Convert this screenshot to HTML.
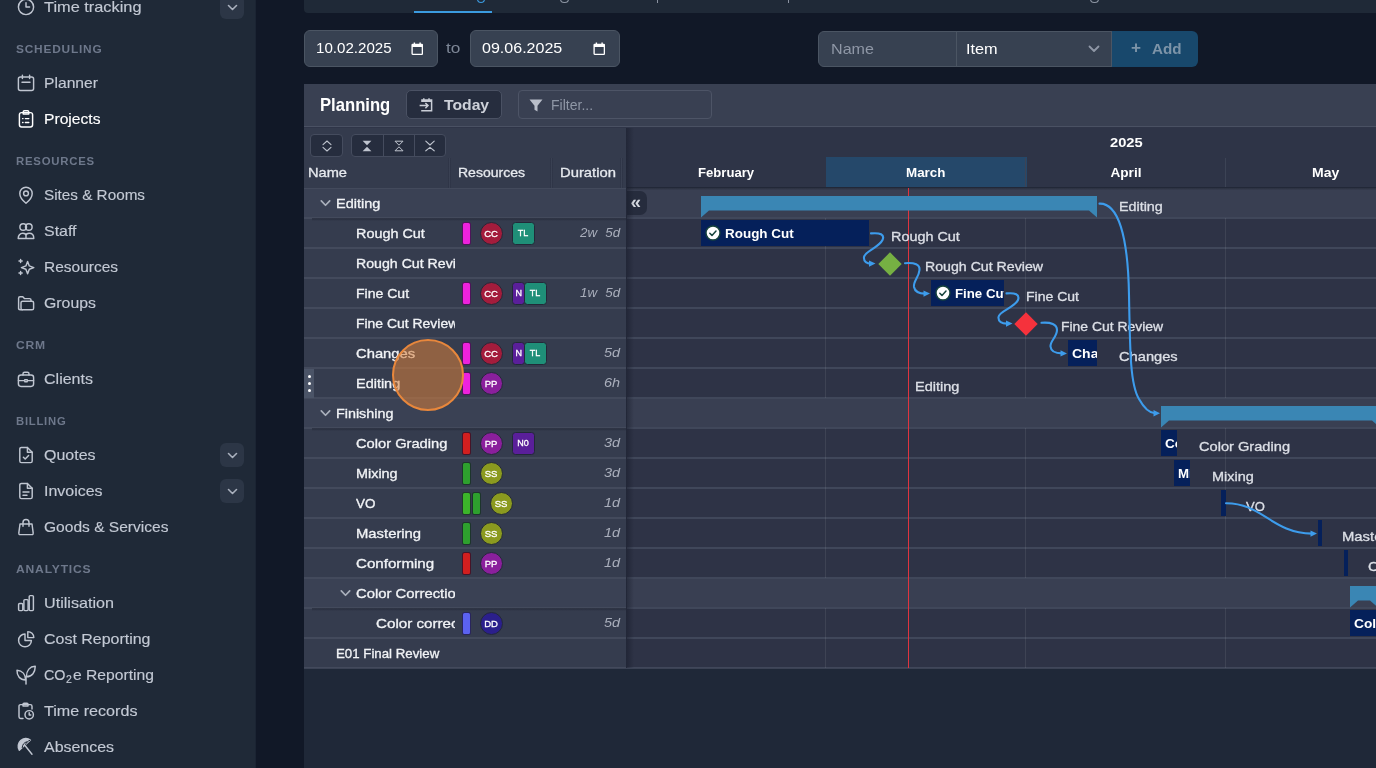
<!DOCTYPE html>
<html lang="en">
<head>
<meta charset="utf-8">
<title>Projects – Planning</title>
<style>
*{box-sizing:border-box;margin:0;padding:0}
html,body{width:1376px;height:768px;overflow:hidden;background:#111827;font-family:"Liberation Sans",sans-serif;color:#d1d5db}
#app{position:relative;width:1376px;height:768px;overflow:hidden;will-change:transform}
#app div,#app span,#app svg,#app i,#app b{position:absolute}
#side{left:0;top:0;width:256px;height:768px;background:#1f2937;border-right:1px solid #1b2433}
.ico{left:16px;width:20px;height:20px;fill:none;stroke:#c0c6d1;stroke-width:1.450;stroke-linecap:round;stroke-linejoin:round}
.ico.act{stroke:#fff}
.chev{left:220px;width:24px;height:24px;border-radius:6px;background:#2c3646}
.chev svg{left:6.500px;top:7.500px;width:11px;height:9px;fill:none;stroke:#aab1be;stroke-width:1.600;stroke-linecap:round;stroke-linejoin:round}
#tabs{left:304px;top:0;width:1072px;height:13px;background:#1f2937;border-radius:0 0 0 4px;overflow:hidden}
#tabs i{left:110px;top:11px;width:78px;height:2px;background:#3b9be0}
.inp{background:#374151;border:1px solid #4b5563;border-radius:6px}
#panel{left:304px;top:84px;width:1072px;height:585px;background:#2f3548;overflow:hidden}
</style>
</head>
<body>
<div id="app">
<div id="side">
<svg class="ico" viewBox="0 0 20 20" style="top:-3px"><circle cx="10" cy="10" r="7.600"/><path d="M10 5.600V10h3.600"/></svg>
<span style="left:44px;top:-3.200px;font-size:15px;line-height:20px;color:#c3c9d4;white-space:nowrap;-webkit-text-stroke:0.15px #c3c9d4;transform:scaleX(1.09);transform-origin:left center;">Time tracking</span>
<span style="left:16px;top:38.709px;font-size:11.800px;line-height:20px;color:#6e788b;white-space:nowrap;font-weight:bold;letter-spacing:0.800px;transform:scaleX(1.006);transform-origin:left center;">SCHEDULING</span>
<svg class="ico" viewBox="0 0 20 20" style="top:73px"><rect x="2.400" y="4" width="15.200" height="13.400" rx="2"/><path d="M6.400 2.200v3.200M13.600 2.200v3.200M6 9.200h8"/></svg>
<span style="left:44px;top:72.799px;font-size:15px;line-height:20px;color:#c3c9d4;white-space:nowrap;-webkit-text-stroke:0.15px #c3c9d4;transform:scaleX(1.044);transform-origin:left center;">Planner</span>
<svg class="ico act" viewBox="0 0 20 20" style="top:109px"><rect x="3.400" y="3.600" width="13.200" height="14.400" rx="2.200"/><path d="M7.200 3.600V3a1.200 1.200 0 0 1 1.200-1.200h3.200A1.200 1.200 0 0 1 12.800 3v.600M7.200 3.600v1.400h5.600V3.600M9.400 9.600h3.400M9.400 13.400h3.400M6.600 9.600h.400M6.600 13.400h.400"/></svg>
<span style="left:44px;top:108.799px;font-size:15px;line-height:20px;color:#fff;white-space:nowrap;-webkit-text-stroke:0.15px #fff;transform:scaleX(1.043);transform-origin:left center;">Projects</span>
<span style="left:16px;top:150.709px;font-size:11.800px;line-height:20px;color:#6e788b;white-space:nowrap;font-weight:bold;letter-spacing:0.800px;transform:scaleX(0.964);transform-origin:left center;">RESOURCES</span>
<svg class="ico" viewBox="0 0 20 20" style="top:185px"><path d="M10 18.200s6.200-5 6.200-9.800a6.200 6.200 0 0 0-12.400 0c0 4.800 6.200 9.800 6.200 9.800z"/><circle cx="10" cy="8.400" r="2.400"/></svg>
<span style="left:44px;top:184.799px;font-size:15px;line-height:20px;color:#c3c9d4;white-space:nowrap;-webkit-text-stroke:0.15px #c3c9d4;transform:scaleX(1.018);transform-origin:left center;">Sites &amp; Rooms</span>
<svg class="ico" viewBox="0 0 20 20" style="top:221px"><circle cx="7.200" cy="6" r="3.300"/><circle cx="12.800" cy="6" r="3.300"/><path d="M2.200 17.400c0-3 1.800-5.200 4.600-5.200 2 0 3.200 1.200 3.200 2.400 0-1.200 1.200-2.400 3.200-2.400 2.800 0 4.600 2.200 4.600 5.200zM10 14.600v2.800"/></svg>
<span style="left:44px;top:220.799px;font-size:15px;line-height:20px;color:#c3c9d4;white-space:nowrap;-webkit-text-stroke:0.15px #c3c9d4;transform:scaleX(1.062);transform-origin:left center;">Staff</span>
<svg class="ico" viewBox="0 0 20 20" style="top:257px"><path d="M11.600 4.400l1.700 4.500 4.500 1.700-4.500 1.700-1.700 4.500-1.700-4.500-4.500-1.700 4.500-1.700z"/><path d="M4.600 2.400v3.200M3 4h3.200M4.600 14.400v3.200M3 16h3.200"/></svg>
<span style="left:44px;top:256.800px;font-size:15px;line-height:20px;color:#c3c9d4;white-space:nowrap;-webkit-text-stroke:0.15px #c3c9d4;transform:scaleX(1.032);transform-origin:left center;">Resources</span>
<svg class="ico" viewBox="0 0 20 20" style="top:293px"><path d="M2.600 15.400V5.200a1.400 1.400 0 0 1 1.400-1.400h2.800l1.600 1.800h5.200a1.400 1.400 0 0 1 1.400 1.400v1.200"/><rect x="5" y="8.200" width="12.600" height="8.600" rx="1.600"/><path d="M2.600 15.400a1.400 1.400 0 0 0 1.400 1.400h2.400"/></svg>
<span style="left:44px;top:292.800px;font-size:15px;line-height:20px;color:#c3c9d4;white-space:nowrap;-webkit-text-stroke:0.15px #c3c9d4;transform:scaleX(1.057);transform-origin:left center;">Groups</span>
<span style="left:16px;top:334.709px;font-size:11.800px;line-height:20px;color:#6e788b;white-space:nowrap;font-weight:bold;letter-spacing:0.800px;transform:scaleX(1.025);transform-origin:left center;">CRM</span>
<svg class="ico" viewBox="0 0 20 20" style="top:369px"><rect x="2.400" y="6" width="15.200" height="11.400" rx="2.600"/><path d="M7 6V4.800a1.600 1.600 0 0 1 1.600-1.600h2.800A1.600 1.600 0 0 1 13 4.800V6M2.400 11.600h6M11.600 11.600h6M8.800 10.600h2.400v2.200H8.800z"/></svg>
<span style="left:44px;top:368.800px;font-size:15px;line-height:20px;color:#c3c9d4;white-space:nowrap;-webkit-text-stroke:0.15px #c3c9d4;transform:scaleX(1.068);transform-origin:left center;">Clients</span>
<span style="left:16px;top:410.709px;font-size:11.800px;line-height:20px;color:#6e788b;white-space:nowrap;font-weight:bold;letter-spacing:0.800px;transform:scaleX(0.956);transform-origin:left center;">BILLING</span>
<svg class="ico" viewBox="0 0 20 20" style="top:445px"><path d="M11.400 2.400H5.400A1.600 1.600 0 0 0 3.800 4v12a1.600 1.600 0 0 0 1.600 1.600h9.200a1.600 1.600 0 0 0 1.600-1.600V7.200z"/><path d="M11.400 2.400v4.800h4.800M7.400 12.200l1.800 1.800 3.400-3.600"/></svg>
<span style="left:44px;top:444.800px;font-size:15px;line-height:20px;color:#c3c9d4;white-space:nowrap;-webkit-text-stroke:0.15px #c3c9d4;transform:scaleX(1.065);transform-origin:left center;">Quotes</span>
<svg class="ico" viewBox="0 0 20 20" style="top:481px"><path d="M11.400 2.400H5.400A1.600 1.600 0 0 0 3.800 4v12a1.600 1.600 0 0 0 1.600 1.600h9.200a1.600 1.600 0 0 0 1.600-1.600V7.200z"/><path d="M11.400 2.400v4.800h4.800M7 11h6M7 14.200h4"/></svg>
<span style="left:44px;top:480.800px;font-size:15px;line-height:20px;color:#c3c9d4;white-space:nowrap;-webkit-text-stroke:0.15px #c3c9d4;transform:scaleX(1.063);transform-origin:left center;">Invoices</span>
<svg class="ico" viewBox="0 0 20 20" style="top:517px"><path d="M4 7h12l1.200 9.200a1.200 1.200 0 0 1-1.200 1.400H4a1.200 1.200 0 0 1-1.200-1.400z"/><path d="M7 9.200V5.400a3 3 0 0 1 6 0v3.800"/></svg>
<span style="left:44px;top:516.799px;font-size:15px;line-height:20px;color:#c3c9d4;white-space:nowrap;-webkit-text-stroke:0.15px #c3c9d4;transform:scaleX(1.037);transform-origin:left center;">Goods &amp; Services</span>
<span style="left:16px;top:558.709px;font-size:11.800px;line-height:20px;color:#6e788b;white-space:nowrap;font-weight:bold;letter-spacing:0.800px;transform:scaleX(1.025);transform-origin:left center;">ANALYTICS</span>
<svg class="ico" viewBox="0 0 20 20" style="top:593px"><rect x="2.600" y="10.400" width="4.200" height="7.200" rx="1"/><rect x="7.900" y="6.600" width="4.200" height="11" rx="1"/><rect x="13.200" y="2.600" width="4.200" height="15" rx="1"/></svg>
<span style="left:44px;top:592.799px;font-size:15px;line-height:20px;color:#c3c9d4;white-space:nowrap;-webkit-text-stroke:0.15px #c3c9d4;transform:scaleX(1.076);transform-origin:left center;">Utilisation</span>
<svg class="ico" viewBox="0 0 20 20" style="top:629px"><path d="M9 5a6.400 6.400 0 1 0 6.400 6.400H9z"/><path d="M11.800 2.600a6 6 0 0 1 6 6h-6z"/></svg>
<span style="left:44px;top:628.799px;font-size:15px;line-height:20px;color:#c3c9d4;white-space:nowrap;-webkit-text-stroke:0.15px #c3c9d4;transform:scaleX(1.064);transform-origin:left center;">Cost Reporting</span>
<svg class="ico" viewBox="0 0 20 20" style="top:665px"><path d="M10 11.800V19"/><path d="M9.600 15C9.600 9.600 6.400 5.600 1 5.200 0.800 11 4 15 9.600 15z"/><path d="M10.400 11.800C10.400 5.200 14 1.400 19.200 1.200 19.400 7 16 11.800 10.400 11.800z"/></svg>
<span style="left:44px;top:664.799px;font-size:15px;line-height:20px;color:#c3c9d4;white-space:nowrap;-webkit-text-stroke:0.15px #c3c9d4;transform:scaleX(0.956);transform-origin:left center;">CO</span>
<span style="left:66.400px;top:669.533px;font-size:10px;line-height:20px;color:#c3c9d4;white-space:nowrap;-webkit-text-stroke:0.15px #c3c9d4;transform:scaleX(1.05);transform-origin:left center;">2</span>
<span style="left:73.100px;top:664.799px;font-size:15px;line-height:20px;color:#c3c9d4;white-space:nowrap;-webkit-text-stroke:0.15px #c3c9d4;transform:scaleX(1.044);transform-origin:left center;">e Reporting</span>
<svg class="ico" viewBox="0 0 20 20" style="top:701px"><path d="M7 17.400H4.600A1.600 1.600 0 0 1 3 15.800V5.200A1.600 1.600 0 0 1 4.600 3.600h9.800A1.600 1.600 0 0 1 16 5.200V8"/><path d="M7 5V3.200A1 1 0 0 1 8 2.200h3a1 1 0 0 1 1 1V5z"/><circle cx="13.200" cy="13.800" r="4.200"/><path d="M13.200 11.800v2.200h1.600"/></svg>
<span style="left:44px;top:700.799px;font-size:15px;line-height:20px;color:#c3c9d4;white-space:nowrap;-webkit-text-stroke:0.15px #c3c9d4;transform:scaleX(1.075);transform-origin:left center;">Time records</span>
<svg class="ico" viewBox="0 0 20 20" style="top:737px"><path d="M3.300 13.200A7.700 7.700 0 0 1 14.400 3z" fill="#c3c9d4"/><path d="M8.800 8.200L16 17.200"/><path d="M6.200 10.600C6.400 7.600 8 5.400 10.800 4.800M9.600 7.400C10.200 5.600 11.600 4.200 14 3.200" stroke="#1f2937" stroke-width="1"/></svg>
<span style="left:44px;top:736.799px;font-size:15px;line-height:20px;color:#c3c9d4;white-space:nowrap;-webkit-text-stroke:0.15px #c3c9d4;transform:scaleX(1.063);transform-origin:left center;">Absences</span>
<div class="chev" style="top:-5px"><svg viewBox="0 0 11 9"><path d="M1.500 2.500l4 4 4-4"/></svg></div>
<div class="chev" style="top:443px"><svg viewBox="0 0 11 9"><path d="M1.500 2.500l4 4 4-4"/></svg></div>
<div class="chev" style="top:479px"><svg viewBox="0 0 11 9"><path d="M1.500 2.500l4 4 4-4"/></svg></div>
</div>
<div id="tabs"><i></i><b style="left:172.500px;top:-4px;width:8px;height:7px;border:1.500px solid #3b9be0;border-top:0;border-radius:0 0 4px 4px"></b><b style="left:255.500px;top:-4px;width:9px;height:7px;border:1.500px solid #8b93a1;border-top:0;border-radius:0 0 4px 4px"></b><b style="left:352.500px;top:0;width:1.500px;height:3px;background:#8b93a1"></b><b style="left:483.500px;top:0;width:1.500px;height:3px;background:#8b93a1"></b><b style="left:786px;top:-4px;width:9px;height:7px;border:1.500px solid #8b93a1;border-top:0;border-radius:0 0 4px 4px"></b></div>
<div class="inp" style="left:304px;top:30px;width:134px;height:37px"><svg viewBox="0 0 14 15" style="left:105.500px;top:11px;width:12.500px;height:13.500px;fill:#fff"><path d="M3 0.500h1.600V2h4.800V0.500H11V2h1.200A1.300 1.300 0 0 1 13.500 3.300v9.900a1.300 1.300 0 0 1-1.300 1.300H1.800A1.300 1.300 0 0 1 0.500 13.200V3.300A1.300 1.300 0 0 1 1.800 2H3zM2 5.600v7.400h10V5.600z" fill-rule="evenodd"/></svg></div>
<span style="left:315.500px;top:38.038px;font-size:14.600px;line-height:20px;color:#fff;white-space:nowrap;transform:scaleX(1.035);transform-origin:left center;">10.02.2025</span>
<span style="left:446px;top:38.226px;font-size:15.500px;line-height:20px;color:#7d8696;white-space:nowrap;transform:scaleX(1.113);transform-origin:left center;">to</span>
<div class="inp" style="left:470px;top:30px;width:150px;height:37px"><svg viewBox="0 0 14 15" style="left:121.500px;top:11px;width:12.500px;height:13.500px;fill:#fff"><path d="M3 0.500h1.600V2h4.800V0.500H11V2h1.200A1.300 1.300 0 0 1 13.500 3.300v9.900a1.300 1.300 0 0 1-1.300 1.300H1.800A1.300 1.300 0 0 1 0.500 13.200V3.300A1.300 1.300 0 0 1 1.800 2H3zM2 5.600v7.400h10V5.600z" fill-rule="evenodd"/></svg></div>
<span style="left:481.500px;top:38.038px;font-size:14.600px;line-height:20px;color:#fff;white-space:nowrap;transform:scaleX(1.099);transform-origin:left center;">09.06.2025</span>
<div style="left:818px;top:31px;width:139px;height:36px;background:#374151;border:1px solid #4b5563;border-radius:6px 0 0 6px"></div>
<span style="left:830.700px;top:38.738px;font-size:14.600px;line-height:20px;color:#8f97a6;white-space:nowrap;transform:scaleX(1.104);transform-origin:left center;">Name</span>
<div style="left:956px;top:31px;width:156px;height:36px;background:#374151;border:1px solid #4b5563"><svg viewBox="0 0 12 8" style="left:131px;top:13px;width:12px;height:8px;fill:none;stroke:#8f97a6;stroke-width:1.800;stroke-linecap:round;stroke-linejoin:round"><path d="M1.500 1.500l4.500 4.500 4.500-4.500"/></svg></div>
<span style="left:966.400px;top:38.738px;font-size:14.600px;line-height:20px;color:#fff;white-space:nowrap;transform:scaleX(1.117);transform-origin:left center;">Item</span>
<div style="left:1112px;top:31px;width:86px;height:36px;background:#18486c;border-radius:0 6px 6px 0"></div>
<span style="left:1130.600px;top:38.053px;font-size:16px;line-height:20px;color:#7d94a8;white-space:nowrap;font-weight:bold;transform:scaleX(1.07);transform-origin:left center;">+</span>
<span style="left:1152.100px;top:38.538px;font-size:14.600px;line-height:20px;color:#7d94a8;white-space:nowrap;font-weight:bold;transform:scaleX(1.043);transform-origin:left center;">Add</span>
<div style="left:304px;top:84px;width:1072px;height:684px;background:#1f2838"></div>
<div id="panel">
<div style="left:0;top:0;width:1072px;height:43px;background:#394052;border-bottom:1px solid #4a5163"></div>
<span style="left:16px;top:10.99px;font-size:18.200px;line-height:20px;color:#fff;white-space:nowrap;font-weight:bold;transform:scaleX(0.915);transform-origin:left center;">Planning</span>
<div style="left:102px;top:6px;width:96px;height:29px;background:#262d3e;border:1px solid #4a5163;border-radius:5px"><svg viewBox="0 0 16 16" style="left:11px;top:6px;width:16px;height:16px;fill:none;stroke:#c9cdd6;stroke-width:1.500;stroke-linecap:butt;stroke-linejoin:miter"><path d="M3.200 3H13.600V13.800H3.200M3.200 4.200H13.600M5.800 1.200V3M11 1.200V3M1.600 8.600H10M7.400 6L10 8.600 7.400 11.200"/></svg></div>
<span style="left:139.800px;top:10.608px;font-size:14.400px;line-height:20px;color:#cdd1d9;white-space:nowrap;font-weight:bold;transform:scaleX(1.092);transform-origin:left center;">Today</span>
<div style="left:214px;top:6px;width:194px;height:29px;background:#394052;border:1px solid #4d5466;border-radius:4px"><svg viewBox="0 0 14 14" style="left:10px;top:8px;width:14px;height:14px;fill:#b9bec9"><path d="M0.500 0.500h13l-5 6.200v5.800l-3-1.800v-4z"/></svg></div>
<span style="left:247.400px;top:10.608px;font-size:14.400px;line-height:20px;color:#8f97a6;white-space:nowrap;transform:scaleX(0.975);transform-origin:left center;">Filter...</span>
<div style="left:0px;top:44px;width:322px;height:60px;background:#343b4d"></div>
<div style="left:6px;top:50px;width:33px;height:23px;background:#262d3e;border:1px solid #454c5e;border-radius:4px"><svg viewBox="0 0 10 12" style="left:11px;top:5px;width:10px;height:12px;fill:none;stroke:#bfc4ce;stroke-width:1.100;stroke-linecap:round;stroke-linejoin:round"><path d="M1 4.600L5 1l4 3.600M1 7.400L5 11l4-3.600"/></svg></div>
<div style="left:47px;top:50px;width:95px;height:23px;background:#262d3e;border:1px solid #454c5e;border-radius:4px"><i style="left:30.500px;top:0;width:1px;height:21px;background:#454c5e"></i><i style="left:61.500px;top:0;width:1px;height:21px;background:#454c5e"></i><svg viewBox="0 0 10 12" style="left:10px;top:5px;width:10px;height:12px;fill:#bfc4ce"><path d="M0.600 0.800h8.800L5 5.200zM0.600 11.200h8.800L5 6.800z"/></svg><svg viewBox="0 0 10 12" style="left:41.500px;top:5px;width:10px;height:12px;stroke:#bfc4ce;stroke-width:1;stroke-linejoin:round;fill:none"><path d="M1 1.200h8L5 5.200zM1 10.800h8L5 6.800z"/></svg><svg viewBox="0 0 10 12" style="left:72.500px;top:5px;width:10px;height:12px;stroke:#bfc4ce;stroke-width:1.100;stroke-linecap:round;stroke-linejoin:round;fill:none"><path d="M0.800 1.200L5 5l4.200-3.800M0.800 10.800L5 7.400l4.200 3.400"/></svg></div>
<span style="left:4px;top:78.997px;font-size:12.700px;line-height:20px;color:#e6e9ee;white-space:nowrap;-webkit-text-stroke:0.300px #e6e9ee;transform:scaleX(1.152);transform-origin:left center;">Name</span>
<span style="left:154px;top:78.997px;font-size:12.700px;line-height:20px;color:#e6e9ee;white-space:nowrap;-webkit-text-stroke:0.300px #e6e9ee;transform:scaleX(1.105);transform-origin:left center;">Resources</span>
<span style="left:256px;top:78.997px;font-size:12.700px;line-height:20px;color:#e6e9ee;white-space:nowrap;-webkit-text-stroke:0.300px #e6e9ee;transform:scaleX(1.167);transform-origin:left center;">Duration</span>
<i style="left:144px;top:74px;width:3px;height:30px;background:linear-gradient(90deg,#2a3042,#3a4153 50%,#2a3042)"></i>
<i style="left:246px;top:74px;width:3px;height:30px;background:linear-gradient(90deg,#2a3042,#3a4153 50%,#2a3042)"></i>
<i style="left:316px;top:74px;width:3px;height:30px;background:linear-gradient(90deg,#2a3042,#3a4153 50%,#2a3042)"></i>
<div style="left:0px;top:104px;width:322px;height:30px;background:#3a4154;border-bottom:1px solid #434a5c;overflow:hidden"><i style="left:0;top:0;width:322px;height:1px;background:#434a5c"></i>
<svg viewBox="0 0 12 8" style="left:16px;top:12px;width:11px;height:7px;fill:none;stroke:#aab0bc;stroke-width:1.900;stroke-linecap:round;stroke-linejoin:round"><path d="M1.200 1l4.800 5L10.800 1"/></svg>
<div style="left:32px;top:6.205px;width:118.500px;height:20px;overflow:hidden"><span style="left:0;top:0;font-size:12.100px;line-height:20px;color:#f1f3f6;white-space:nowrap;-webkit-text-stroke:0.300px #f1f3f6;transform:scaleX(1.198);transform-origin:left center;">Editing</span></div>
</div>
<div style="left:0px;top:134px;width:322px;height:30px;background:#353c4e;border-bottom:1px solid #434a5c;overflow:hidden"><i style="left:0;top:0;width:322px;height:1px;background:#434a5c"></i>
<div style="left:52px;top:6.205px;width:98.500px;height:20px;overflow:hidden"><span style="left:0;top:0;font-size:12.100px;line-height:20px;color:#f1f3f6;white-space:nowrap;-webkit-text-stroke:0.300px #f1f3f6;transform:scaleX(1.19);transform-origin:left center;">Rough Cut</span></div>
<i style="left:157.5px;top:3.500px;width:9.500px;height:23.500px;background:#ee22dd;border:1.500px solid rgba(24,18,44,.75);border-radius:2.500px"></i>
<b style="left:175.5px;top:3.500px;width:23px;height:23px;border-radius:11.500px;background:#a31c3c;border:1px solid #232939;color:#fff;font-size:9.500px;font-weight:normal;-webkit-text-stroke:.300px #fff;line-height:21px;text-align:center">CC</b>
<b style="left:207.5px;top:3.500px;width:23px;height:23px;border-radius:3.500px;background:#1f8f78;border:1px solid #232939;color:#fff;font-size:9px;font-weight:normal;-webkit-text-stroke:.300px #fff;line-height:21px;text-align:center;">TL</b>
<span style="left:276px;top:4.532px;font-size:12.600px;line-height:20px;color:#a9aebb;white-space:nowrap;font-style:italic;word-spacing:4.200px;transform:scaleX(1.063);transform-origin:left center;">2w 5d</span>
</div>
<div style="left:0px;top:164px;width:322px;height:30px;background:#353c4e;border-bottom:1px solid #434a5c;overflow:hidden"><i style="left:0;top:0;width:322px;height:1px;background:#434a5c"></i>
<div style="left:52px;top:6.205px;width:98.500px;height:20px;overflow:hidden"><span style="left:0;top:0;font-size:12.100px;line-height:20px;color:#f1f3f6;white-space:nowrap;-webkit-text-stroke:0.300px #f1f3f6;transform:scaleX(1.17);transform-origin:left center;">Rough Cut Review</span></div>
</div>
<div style="left:0px;top:194px;width:322px;height:30px;background:#353c4e;border-bottom:1px solid #434a5c;overflow:hidden"><i style="left:0;top:0;width:322px;height:1px;background:#434a5c"></i>
<div style="left:52px;top:6.205px;width:98.500px;height:20px;overflow:hidden"><span style="left:0;top:0;font-size:12.100px;line-height:20px;color:#f1f3f6;white-space:nowrap;-webkit-text-stroke:0.300px #f1f3f6;transform:scaleX(1.161);transform-origin:left center;">Fine Cut</span></div>
<i style="left:157.5px;top:3.500px;width:9.500px;height:23.500px;background:#ee22dd;border:1.500px solid rgba(24,18,44,.75);border-radius:2.500px"></i>
<b style="left:175.5px;top:3.500px;width:23px;height:23px;border-radius:11.500px;background:#a31c3c;border:1px solid #232939;color:#fff;font-size:9.500px;font-weight:normal;-webkit-text-stroke:.300px #fff;line-height:21px;text-align:center">CC</b>
<b style="left:207.5px;top:3.500px;width:13px;height:23px;border-radius:3.500px;background:#5a1f9a;border:1px solid #232939;color:#fff;font-size:9px;font-weight:normal;-webkit-text-stroke:.300px #fff;line-height:21px;text-align:left;padding-left:3px;">N</b>
<b style="left:219.5px;top:3.500px;width:23px;height:23px;border-radius:3.500px;background:#1f8f78;border:1px solid #232939;color:#fff;font-size:9px;font-weight:normal;-webkit-text-stroke:.300px #fff;line-height:21px;text-align:center;">TL</b>
<span style="left:276px;top:4.532px;font-size:12.600px;line-height:20px;color:#a9aebb;white-space:nowrap;font-style:italic;word-spacing:4.200px;transform:scaleX(1.063);transform-origin:left center;">1w 5d</span>
</div>
<div style="left:0px;top:224px;width:322px;height:30px;background:#353c4e;border-bottom:1px solid #434a5c;overflow:hidden"><i style="left:0;top:0;width:322px;height:1px;background:#434a5c"></i>
<div style="left:52px;top:6.205px;width:98.500px;height:20px;overflow:hidden"><span style="left:0;top:0;font-size:12.100px;line-height:20px;color:#f1f3f6;white-space:nowrap;-webkit-text-stroke:0.300px #f1f3f6;transform:scaleX(1.152);transform-origin:left center;">Fine Cut Review</span></div>
</div>
<div style="left:0px;top:254px;width:322px;height:30px;background:#353c4e;border-bottom:1px solid #434a5c;overflow:hidden"><i style="left:0;top:0;width:322px;height:1px;background:#434a5c"></i>
<div style="left:52px;top:6.205px;width:98.500px;height:20px;overflow:hidden"><span style="left:0;top:0;font-size:12.100px;line-height:20px;color:#f1f3f6;white-space:nowrap;-webkit-text-stroke:0.300px #f1f3f6;transform:scaleX(1.221);transform-origin:left center;">Changes</span></div>
<i style="left:157.5px;top:3.500px;width:9.500px;height:23.500px;background:#ee22dd;border:1.500px solid rgba(24,18,44,.75);border-radius:2.500px"></i>
<b style="left:175.5px;top:3.500px;width:23px;height:23px;border-radius:11.500px;background:#a31c3c;border:1px solid #232939;color:#fff;font-size:9.500px;font-weight:normal;-webkit-text-stroke:.300px #fff;line-height:21px;text-align:center">CC</b>
<b style="left:207.5px;top:3.500px;width:13px;height:23px;border-radius:3.500px;background:#5a1f9a;border:1px solid #232939;color:#fff;font-size:9px;font-weight:normal;-webkit-text-stroke:.300px #fff;line-height:21px;text-align:left;padding-left:3px;">N</b>
<b style="left:219.5px;top:3.500px;width:23px;height:23px;border-radius:3.500px;background:#1f8f78;border:1px solid #232939;color:#fff;font-size:9px;font-weight:normal;-webkit-text-stroke:.300px #fff;line-height:21px;text-align:center;">TL</b>
<span style="left:300.100px;top:4.532px;font-size:12.600px;line-height:20px;color:#a9aebb;white-space:nowrap;font-style:italic;word-spacing:4.200px;transform:scaleX(1.149);transform-origin:left center;">5d</span>
</div>
<div style="left:0px;top:284px;width:322px;height:30px;background:#353c4e;border-bottom:1px solid #434a5c;overflow:hidden"><i style="left:0;top:0;width:322px;height:1px;background:#434a5c"></i>
<div style="left:52px;top:6.205px;width:98.500px;height:20px;overflow:hidden"><span style="left:0;top:0;font-size:12.100px;line-height:20px;color:#f1f3f6;white-space:nowrap;-webkit-text-stroke:0.300px #f1f3f6;transform:scaleX(1.195);transform-origin:left center;">Editing</span></div>
<i style="left:157.5px;top:3.500px;width:9.500px;height:23.500px;background:#ee22dd;border:1.500px solid rgba(24,18,44,.75);border-radius:2.500px"></i>
<b style="left:175.5px;top:3.500px;width:23px;height:23px;border-radius:11.500px;background:#8a1f9c;border:1px solid #232939;color:#fff;font-size:9.500px;font-weight:normal;-webkit-text-stroke:.300px #fff;line-height:21px;text-align:center">PP</b>
<span style="left:300.100px;top:4.532px;font-size:12.600px;line-height:20px;color:#a9aebb;white-space:nowrap;font-style:italic;word-spacing:4.200px;transform:scaleX(1.149);transform-origin:left center;">6h</span>
</div>
<div style="left:0px;top:314px;width:322px;height:30px;background:#3a4154;border-bottom:1px solid #434a5c;overflow:hidden"><i style="left:0;top:0;width:322px;height:1px;background:#434a5c"></i>
<svg viewBox="0 0 12 8" style="left:16px;top:12px;width:11px;height:7px;fill:none;stroke:#aab0bc;stroke-width:1.900;stroke-linecap:round;stroke-linejoin:round"><path d="M1.200 1l4.800 5L10.800 1"/></svg>
<div style="left:32px;top:6.205px;width:118.500px;height:20px;overflow:hidden"><span style="left:0;top:0;font-size:12.100px;line-height:20px;color:#f1f3f6;white-space:nowrap;-webkit-text-stroke:0.300px #f1f3f6;transform:scaleX(1.186);transform-origin:left center;">Finishing</span></div>
</div>
<div style="left:0px;top:344px;width:322px;height:30px;background:#353c4e;border-bottom:1px solid #434a5c;overflow:hidden"><i style="left:0;top:0;width:322px;height:1px;background:#434a5c"></i>
<div style="left:52px;top:6.205px;width:98.500px;height:20px;overflow:hidden"><span style="left:0;top:0;font-size:12.100px;line-height:20px;color:#f1f3f6;white-space:nowrap;-webkit-text-stroke:0.300px #f1f3f6;transform:scaleX(1.213);transform-origin:left center;">Color Grading</span></div>
<i style="left:157.5px;top:3.500px;width:9.500px;height:23.500px;background:#d21f1f;border:1.500px solid rgba(24,18,44,.75);border-radius:2.500px"></i>
<b style="left:175.5px;top:3.500px;width:23px;height:23px;border-radius:11.500px;background:#8a1f9c;border:1px solid #232939;color:#fff;font-size:9.500px;font-weight:normal;-webkit-text-stroke:.300px #fff;line-height:21px;text-align:center">PP</b>
<b style="left:207.5px;top:3.500px;width:23px;height:23px;border-radius:3.500px;background:#5a1f9a;border:1px solid #232939;color:#fff;font-size:9px;font-weight:normal;-webkit-text-stroke:.300px #fff;line-height:21px;text-align:center;">N0</b>
<span style="left:300.100px;top:4.532px;font-size:12.600px;line-height:20px;color:#a9aebb;white-space:nowrap;font-style:italic;word-spacing:4.200px;transform:scaleX(1.149);transform-origin:left center;">3d</span>
</div>
<div style="left:0px;top:374px;width:322px;height:30px;background:#353c4e;border-bottom:1px solid #434a5c;overflow:hidden"><i style="left:0;top:0;width:322px;height:1px;background:#434a5c"></i>
<div style="left:52px;top:6.205px;width:98.500px;height:20px;overflow:hidden"><span style="left:0;top:0;font-size:12.100px;line-height:20px;color:#f1f3f6;white-space:nowrap;-webkit-text-stroke:0.300px #f1f3f6;transform:scaleX(1.19);transform-origin:left center;">Mixing</span></div>
<i style="left:157.5px;top:3.500px;width:9.500px;height:23.500px;background:#2ea02e;border:1.500px solid rgba(24,18,44,.75);border-radius:2.500px"></i>
<b style="left:175.5px;top:3.500px;width:23px;height:23px;border-radius:11.500px;background:#8b9a1f;border:1px solid #232939;color:#fff;font-size:9.500px;font-weight:normal;-webkit-text-stroke:.300px #fff;line-height:21px;text-align:center">SS</b>
<span style="left:300.100px;top:4.532px;font-size:12.600px;line-height:20px;color:#a9aebb;white-space:nowrap;font-style:italic;word-spacing:4.200px;transform:scaleX(1.149);transform-origin:left center;">3d</span>
</div>
<div style="left:0px;top:404px;width:322px;height:30px;background:#353c4e;border-bottom:1px solid #434a5c;overflow:hidden"><i style="left:0;top:0;width:322px;height:1px;background:#434a5c"></i>
<div style="left:52px;top:6.205px;width:98.500px;height:20px;overflow:hidden"><span style="left:0;top:0;font-size:12.100px;line-height:20px;color:#f1f3f6;white-space:nowrap;-webkit-text-stroke:0.300px #f1f3f6;transform:scaleX(1.11);transform-origin:left center;">VO</span></div>
<i style="left:157.5px;top:3.500px;width:9.500px;height:23.500px;background:#3cb52a;border:1.500px solid rgba(24,18,44,.75);border-radius:2.500px"></i>
<i style="left:167.5px;top:3.500px;width:9.500px;height:23.500px;background:#2ea02e;border:1.500px solid rgba(24,18,44,.75);border-radius:2.500px"></i>
<b style="left:185.5px;top:3.500px;width:23px;height:23px;border-radius:11.500px;background:#8b9a1f;border:1px solid #232939;color:#fff;font-size:9.500px;font-weight:normal;-webkit-text-stroke:.300px #fff;line-height:21px;text-align:center">SS</b>
<span style="left:300.100px;top:4.532px;font-size:12.600px;line-height:20px;color:#a9aebb;white-space:nowrap;font-style:italic;word-spacing:4.200px;transform:scaleX(1.149);transform-origin:left center;">1d</span>
</div>
<div style="left:0px;top:434px;width:322px;height:30px;background:#353c4e;border-bottom:1px solid #434a5c;overflow:hidden"><i style="left:0;top:0;width:322px;height:1px;background:#434a5c"></i>
<div style="left:52px;top:6.205px;width:98.500px;height:20px;overflow:hidden"><span style="left:0;top:0;font-size:12.100px;line-height:20px;color:#f1f3f6;white-space:nowrap;-webkit-text-stroke:0.300px #f1f3f6;transform:scaleX(1.226);transform-origin:left center;">Mastering</span></div>
<i style="left:157.5px;top:3.500px;width:9.500px;height:23.500px;background:#2ea02e;border:1.500px solid rgba(24,18,44,.75);border-radius:2.500px"></i>
<b style="left:175.5px;top:3.500px;width:23px;height:23px;border-radius:11.500px;background:#8b9a1f;border:1px solid #232939;color:#fff;font-size:9.500px;font-weight:normal;-webkit-text-stroke:.300px #fff;line-height:21px;text-align:center">SS</b>
<span style="left:300.100px;top:4.532px;font-size:12.600px;line-height:20px;color:#a9aebb;white-space:nowrap;font-style:italic;word-spacing:4.200px;transform:scaleX(1.149);transform-origin:left center;">1d</span>
</div>
<div style="left:0px;top:464px;width:322px;height:30px;background:#353c4e;border-bottom:1px solid #434a5c;overflow:hidden"><i style="left:0;top:0;width:322px;height:1px;background:#434a5c"></i>
<div style="left:52px;top:6.205px;width:98.500px;height:20px;overflow:hidden"><span style="left:0;top:0;font-size:12.100px;line-height:20px;color:#f1f3f6;white-space:nowrap;-webkit-text-stroke:0.300px #f1f3f6;transform:scaleX(1.251);transform-origin:left center;">Conforming</span></div>
<i style="left:157.5px;top:3.500px;width:9.500px;height:23.500px;background:#d21f1f;border:1.500px solid rgba(24,18,44,.75);border-radius:2.500px"></i>
<b style="left:175.5px;top:3.500px;width:23px;height:23px;border-radius:11.500px;background:#8a1f9c;border:1px solid #232939;color:#fff;font-size:9.500px;font-weight:normal;-webkit-text-stroke:.300px #fff;line-height:21px;text-align:center">PP</b>
<span style="left:300.100px;top:4.532px;font-size:12.600px;line-height:20px;color:#a9aebb;white-space:nowrap;font-style:italic;word-spacing:4.200px;transform:scaleX(1.149);transform-origin:left center;">1d</span>
</div>
<div style="left:0px;top:494px;width:322px;height:30px;background:#3a4154;border-bottom:1px solid #434a5c;overflow:hidden"><i style="left:0;top:0;width:322px;height:1px;background:#434a5c"></i>
<svg viewBox="0 0 12 8" style="left:36px;top:12px;width:11px;height:7px;fill:none;stroke:#aab0bc;stroke-width:1.900;stroke-linecap:round;stroke-linejoin:round"><path d="M1.200 1l4.800 5L10.800 1"/></svg>
<div style="left:52px;top:6.205px;width:98.500px;height:20px;overflow:hidden"><span style="left:0;top:0;font-size:12.100px;line-height:20px;color:#f1f3f6;white-space:nowrap;-webkit-text-stroke:0.300px #f1f3f6;transform:scaleX(1.227);transform-origin:left center;">Color Correction</span></div>
</div>
<div style="left:0px;top:524px;width:322px;height:30px;background:#353c4e;border-bottom:1px solid #434a5c;overflow:hidden"><i style="left:0;top:0;width:322px;height:1px;background:#434a5c"></i>
<div style="left:72px;top:6.205px;width:78.500px;height:20px;overflow:hidden"><span style="left:0;top:0;font-size:12.100px;line-height:20px;color:#f1f3f6;white-space:nowrap;-webkit-text-stroke:0.300px #f1f3f6;transform:scaleX(1.254);transform-origin:left center;">Color correction</span></div>
<i style="left:157.5px;top:3.500px;width:9.500px;height:23.500px;background:#5b62f0;border:1.500px solid rgba(24,18,44,.75);border-radius:2.500px"></i>
<b style="left:175.5px;top:3.500px;width:23px;height:23px;border-radius:11.500px;background:#2b1f8c;border:1px solid #232939;color:#fff;font-size:9.500px;font-weight:normal;-webkit-text-stroke:.300px #fff;line-height:21px;text-align:center">DD</b>
<span style="left:300.100px;top:4.532px;font-size:12.600px;line-height:20px;color:#a9aebb;white-space:nowrap;font-style:italic;word-spacing:4.200px;transform:scaleX(1.149);transform-origin:left center;">5d</span>
</div>
<div style="left:0px;top:554px;width:322px;height:30px;background:#353c4e;border-bottom:1px solid #434a5c;overflow:hidden"><i style="left:0;top:0;width:322px;height:1px;background:#434a5c"></i>
<div style="left:32px;top:6.205px;width:118.500px;height:20px;overflow:hidden"><span style="left:0;top:0;font-size:12.100px;line-height:20px;color:#f1f3f6;white-space:nowrap;-webkit-text-stroke:0.300px #f1f3f6;transform:scaleX(1.097);transform-origin:left center;">E01 Final Review</span></div>
</div>
<i style="left:8px;top:134px;width:314px;height:3px;background:linear-gradient(180deg,rgba(22,26,40,.55),rgba(22,26,40,0))"></i>
<i style="left:8px;top:344px;width:314px;height:3px;background:linear-gradient(180deg,rgba(22,26,40,.55),rgba(22,26,40,0))"></i>
<i style="left:8px;top:524px;width:314px;height:3px;background:linear-gradient(180deg,rgba(22,26,40,.55),rgba(22,26,40,0))"></i>
<div style="left:323px;top:44px;width:749px;height:540px;background:#2e3346;overflow:hidden">
<div style="left:0px;top:0px;width:749px;height:60px;background:#2e3447;border-bottom:1px solid #222838"></div>
<div style="left:199px;top:29px;width:201px;height:30px;background:#25486a"></div>
<i style="left:398px;top:30px;width:1px;height:29px;background:#3c4355"></i>
<i style="left:598px;top:30px;width:1px;height:29px;background:#3c4355"></i>
<span style="left:482.600px;top:4.885px;font-size:13.600px;line-height:20px;color:#fff;white-space:nowrap;font-weight:bold;transform:scaleX(1.081);transform-origin:left center;">2025</span>
<span style="left:70.900px;top:35.185px;font-size:13.600px;line-height:20px;color:#fff;white-space:nowrap;font-weight:bold;transform:scaleX(0.964);transform-origin:left center;">February</span>
<span style="left:278.900px;top:35.185px;font-size:13.600px;line-height:20px;color:#fff;white-space:nowrap;font-weight:bold;transform:scaleX(0.984);transform-origin:left center;">March</span>
<span style="left:483.500px;top:35.185px;font-size:13.600px;line-height:20px;color:#fff;white-space:nowrap;font-weight:bold;">April</span>
<span style="left:685.400px;top:35.185px;font-size:13.600px;line-height:20px;color:#fff;white-space:nowrap;font-weight:bold;transform:scaleX(1.032);transform-origin:left center;">May</span>
<div style="left:0px;top:90px;width:749px;height:30px;background:#2e3346;border-bottom:1px solid #40475a;border-top:1px solid #40475a"></div>
<div style="left:0px;top:120px;width:749px;height:30px;background:#2e3346;border-bottom:1px solid #40475a;border-top:1px solid #40475a"></div>
<div style="left:0px;top:150px;width:749px;height:30px;background:#2e3346;border-bottom:1px solid #40475a;border-top:1px solid #40475a"></div>
<div style="left:0px;top:180px;width:749px;height:30px;background:#2e3346;border-bottom:1px solid #40475a;border-top:1px solid #40475a"></div>
<div style="left:0px;top:210px;width:749px;height:30px;background:#2e3346;border-bottom:1px solid #40475a;border-top:1px solid #40475a"></div>
<div style="left:0px;top:240px;width:749px;height:30px;background:#2e3346;border-bottom:1px solid #40475a;border-top:1px solid #40475a"></div>
<div style="left:0px;top:300px;width:749px;height:30px;background:#2e3346;border-bottom:1px solid #40475a;border-top:1px solid #40475a"></div>
<div style="left:0px;top:330px;width:749px;height:30px;background:#2e3346;border-bottom:1px solid #40475a;border-top:1px solid #40475a"></div>
<div style="left:0px;top:360px;width:749px;height:30px;background:#2e3346;border-bottom:1px solid #40475a;border-top:1px solid #40475a"></div>
<div style="left:0px;top:390px;width:749px;height:30px;background:#2e3346;border-bottom:1px solid #40475a;border-top:1px solid #40475a"></div>
<div style="left:0px;top:420px;width:749px;height:30px;background:#2e3346;border-bottom:1px solid #40475a;border-top:1px solid #40475a"></div>
<div style="left:0px;top:480px;width:749px;height:30px;background:#2e3346;border-bottom:1px solid #40475a;border-top:1px solid #40475a"></div>
<div style="left:0px;top:510px;width:749px;height:30px;background:#2e3346;border-bottom:1px solid #40475a;border-top:1px solid #40475a"></div>
<i style="left:198px;top:60px;width:1px;height:480px;background:rgba(255,255,255,.08)"></i>
<i style="left:398px;top:60px;width:1px;height:480px;background:rgba(255,255,255,.08)"></i>
<i style="left:598px;top:60px;width:1px;height:480px;background:rgba(255,255,255,.08)"></i>
<div style="left:0px;top:60px;width:749px;height:30px;background:#393f52;border-bottom:1px solid #40475a;border-top:1px solid #40475a"></div>
<div style="left:0px;top:270px;width:749px;height:30px;background:#393f52;border-bottom:1px solid #40475a;border-top:1px solid #40475a"></div>
<div style="left:0px;top:450px;width:749px;height:30px;background:#393f52;border-bottom:1px solid #40475a;border-top:1px solid #40475a"></div>
<i style="left:0px;top:60px;width:749px;height:2px;background:linear-gradient(180deg,rgba(20,24,36,.55),rgba(20,24,36,0))"></i>
<i style="left:281px;top:60px;width:1px;height:480px;background:#e0343f"></i>
<div style="left:0px;top:63px;width:20px;height:24px;background:#262c3d;border-radius:0 7px 7px 0"><span style="left:3.500px;top:1px;font-size:19px;line-height:20px;color:#d5d9e0;font-weight:bold;white-space:nowrap">&laquo;</span></div>
<svg style="left:74px;top:68px;width:396px;height:22px" viewBox="0 0 396 22"><path d="M0 0H396V21.500L388 14.500H8L0 21.500z" fill="#3a86b4"/></svg>
<div style="left:74px;top:92px;width:168px;height:26px;background:#05205a;overflow:hidden">
<svg viewBox="0 0 16 16" style="left:4px;top:5px;width:16px;height:16px"><circle cx="8" cy="8" r="7" fill="#fff" stroke="#17443d" stroke-width="1.400"/><path d="M4.800 8.200l2.200 2.200 4-4.400" fill="none" stroke="#17443d" stroke-width="1.500" stroke-linecap="round" stroke-linejoin="round"/></svg>
<span style="left:24px;top:4.301px;font-size:12.400px;line-height:20px;color:#fff;white-space:nowrap;font-weight:bold;transform:scaleX(1.085);transform-origin:left center;">Rough Cut</span>
</div>
<svg style="left:251px;top:123.500px;width:24px;height:24px" viewBox="0 0 24 24"><path d="M12 0.300L23.700 12 12 23.700 0.300 12z" fill="#76b043"/></svg>
<div style="left:304px;top:152px;width:73px;height:26px;background:#05205a;overflow:hidden">
<svg viewBox="0 0 16 16" style="left:4px;top:5px;width:16px;height:16px"><circle cx="8" cy="8" r="7" fill="#fff" stroke="#17443d" stroke-width="1.400"/><path d="M4.800 8.200l2.200 2.200 4-4.400" fill="none" stroke="#17443d" stroke-width="1.500" stroke-linecap="round" stroke-linejoin="round"/></svg>
<span style="left:24px;top:4.301px;font-size:12.400px;line-height:20px;color:#fff;white-space:nowrap;font-weight:bold;transform:scaleX(1.069);transform-origin:left center;">Fine Cut</span>
</div>
<svg style="left:387px;top:183.500px;width:24px;height:24px" viewBox="0 0 24 24"><path d="M12 0.300L23.700 12 12 23.700 0.300 12z" fill="#f5323c"/></svg>
<div style="left:441px;top:212px;width:29px;height:26px;background:#05205a;overflow:hidden">
<span style="left:3.600px;top:4.301px;font-size:12.400px;line-height:20px;color:#fff;white-space:nowrap;font-weight:bold;transform:scaleX(1.128);transform-origin:left center;">Changes</span>
</div>
<svg style="left:534px;top:278px;width:219px;height:22px" viewBox="0 0 219 22"><path d="M0 0H219V21.500L211 14.500H8L0 21.500z" fill="#3a86b4"/></svg>
<div style="left:534px;top:302px;width:16px;height:26px;background:#05205a;overflow:hidden">
<span style="left:3.600px;top:4.301px;font-size:12.400px;line-height:20px;color:#fff;white-space:nowrap;font-weight:bold;transform:scaleX(1.092);transform-origin:left center;">Color Grading</span>
</div>
<div style="left:547px;top:332px;width:16px;height:26px;background:#05205a;overflow:hidden">
<span style="left:3.600px;top:4.301px;font-size:12.400px;line-height:20px;color:#fff;white-space:nowrap;font-weight:bold;transform:scaleX(1.07);transform-origin:left center;">Mixing</span>
</div>
<div style="left:594px;top:362px;width:5px;height:26px;background:#05205a;overflow:hidden">
</div>
<div style="left:691px;top:392px;width:4px;height:26px;background:#05205a;overflow:hidden">
</div>
<div style="left:717px;top:422px;width:4px;height:26px;background:#05205a;overflow:hidden">
</div>
<svg style="left:723px;top:458px;width:28px;height:22px" viewBox="0 0 28 22"><path d="M0 0H28V21.500L20 14.500H8L0 21.500z" fill="#3a86b4"/></svg>
<div style="left:723px;top:482px;width:50px;height:26px;background:#05205a;overflow:hidden">
<span style="left:3.600px;top:4.301px;font-size:12.400px;line-height:20px;color:#fff;white-space:nowrap;font-weight:bold;transform:scaleX(1.11);transform-origin:left center;">Color correction</span>
</div>
<span style="left:492px;top:68.701px;font-size:12.400px;line-height:20px;color:#dcdfe6;white-space:nowrap;-webkit-text-stroke:0.32px #dcdfe6;transform:scaleX(1.156);transform-origin:left center;">Editing</span>
<span style="left:264px;top:98.701px;font-size:12.400px;line-height:20px;color:#dcdfe6;white-space:nowrap;-webkit-text-stroke:0.32px #dcdfe6;transform:scaleX(1.161);transform-origin:left center;">Rough Cut</span>
<span style="left:298px;top:128.701px;font-size:12.400px;line-height:20px;color:#dcdfe6;white-space:nowrap;-webkit-text-stroke:0.32px #dcdfe6;transform:scaleX(1.142);transform-origin:left center;">Rough Cut Review</span>
<span style="left:399px;top:158.701px;font-size:12.400px;line-height:20px;color:#dcdfe6;white-space:nowrap;-webkit-text-stroke:0.32px #dcdfe6;transform:scaleX(1.132);transform-origin:left center;">Fine Cut</span>
<span style="left:434px;top:188.701px;font-size:12.400px;line-height:20px;color:#dcdfe6;white-space:nowrap;-webkit-text-stroke:0.32px #dcdfe6;transform:scaleX(1.124);transform-origin:left center;">Fine Cut Review</span>
<span style="left:492px;top:218.701px;font-size:12.400px;line-height:20px;color:#dcdfe6;white-space:nowrap;-webkit-text-stroke:0.32px #dcdfe6;transform:scaleX(1.183);transform-origin:left center;">Changes</span>
<span style="left:288px;top:248.701px;font-size:12.400px;line-height:20px;color:#dcdfe6;white-space:nowrap;-webkit-text-stroke:0.32px #dcdfe6;transform:scaleX(1.172);transform-origin:left center;">Editing</span>
<span style="left:572px;top:308.701px;font-size:12.400px;line-height:20px;color:#dcdfe6;white-space:nowrap;-webkit-text-stroke:0.32px #dcdfe6;transform:scaleX(1.18);transform-origin:left center;">Color Grading</span>
<span style="left:585px;top:338.701px;font-size:12.400px;line-height:20px;color:#dcdfe6;white-space:nowrap;-webkit-text-stroke:0.32px #dcdfe6;transform:scaleX(1.167);transform-origin:left center;">Mixing</span>
<span style="left:619px;top:368.701px;font-size:12.400px;line-height:20px;color:#dcdfe6;white-space:nowrap;-webkit-text-stroke:0.32px #dcdfe6;transform:scaleX(1.05);transform-origin:left center;">VO</span>
<span style="left:715.400px;top:398.701px;font-size:12.400px;line-height:20px;color:#dcdfe6;white-space:nowrap;-webkit-text-stroke:0.32px #dcdfe6;transform:scaleX(1.197);transform-origin:left center;">Mastering</span>
<span style="left:741px;top:428.701px;font-size:12.400px;line-height:20px;color:#dcdfe6;white-space:nowrap;-webkit-text-stroke:0.32px #dcdfe6;transform:scaleX(1.221);transform-origin:left center;">Conforming</span>
<svg style="left:0;top:0;width:749px;height:540px" viewBox="627 128 749 540">
<path d="M871 233.400C880 232.500 885 234.500 882.500 240C879 247.500 865 251 864 257C863.500 262 867 263.600 871 263.600" fill="none" stroke="#3d9cec" stroke-width="2.100" stroke-linecap="round"/>
<path d="M0 0L-6.500 -3.200V3.200z" fill="#3d9cec" transform="translate(875.500 263.600) rotate(0)"/>
<path d="M905 263.200C915 262.500 920 264.500 919.500 270C919 277 913 281 914 287C915 292 919 293.600 925 293.600" fill="none" stroke="#3d9cec" stroke-width="2.100" stroke-linecap="round"/>
<path d="M0 0L-6.500 -3.200V3.200z" fill="#3d9cec" transform="translate(930 293.600) rotate(0)"/>
<path d="M1006.500 293.400C1015 292.500 1020 294.500 1018 300C1015 307.500 999 311 998.500 317C998 322 1002 323.600 1007 323.600" fill="none" stroke="#3d9cec" stroke-width="2.100" stroke-linecap="round"/>
<path d="M0 0L-6.500 -3.200V3.200z" fill="#3d9cec" transform="translate(1012.500 323.600) rotate(0)"/>
<path d="M1041.500 322.800C1051 322 1057 324.500 1057 330C1057 337 1050 341 1050.500 346.500C1051 352 1056 353.400 1062 353.400" fill="none" stroke="#3d9cec" stroke-width="2.100" stroke-linecap="round"/>
<path d="M0 0L-6.500 -3.200V3.200z" fill="#3d9cec" transform="translate(1067 353.400) rotate(0)"/>
<path d="M1099.500 203.600C1118 203 1128 235 1129 295C1130 355 1130.500 385 1139 399C1144 408 1149 413 1155 413.200" fill="none" stroke="#3d9cec" stroke-width="2.100" stroke-linecap="round"/>
<path d="M0 0L-6.500 -3.200V3.200z" fill="#3d9cec" transform="translate(1160 413.200) rotate(0)"/>
<path d="M1226 503.200C1262 503 1272 533 1312 533.600" fill="none" stroke="#3d9cec" stroke-width="2.100" stroke-linecap="round"/>
<path d="M0 0L-6.500 -3.200V3.200z" fill="#3d9cec" transform="translate(1317 533.600) rotate(0)"/>
</svg>
</div>
<i style="left:0px;top:584px;width:1072px;height:1px;background:#3b4254"></i>
<div style="left:0px;top:285px;width:10px;height:29px;background:#4b5467"><i style="left:3.500px;top:6px;width:3px;height:3px;border-radius:2px;background:#fff"></i><i style="left:3.500px;top:13px;width:3px;height:3px;border-radius:2px;background:#fff"></i><i style="left:3.500px;top:20px;width:3px;height:3px;border-radius:2px;background:#fff"></i></div>
<div style="left:88px;top:255px;width:72px;height:72px;border-radius:36px;background:rgba(216,127,58,.55);border:2px solid #e8873c"></div>
<i style="left:322px;top:44px;width:8px;height:540px;background:linear-gradient(90deg,rgba(20,24,38,.5),rgba(20,24,38,0))"></i>
</div>
</div>
</body>
</html>
